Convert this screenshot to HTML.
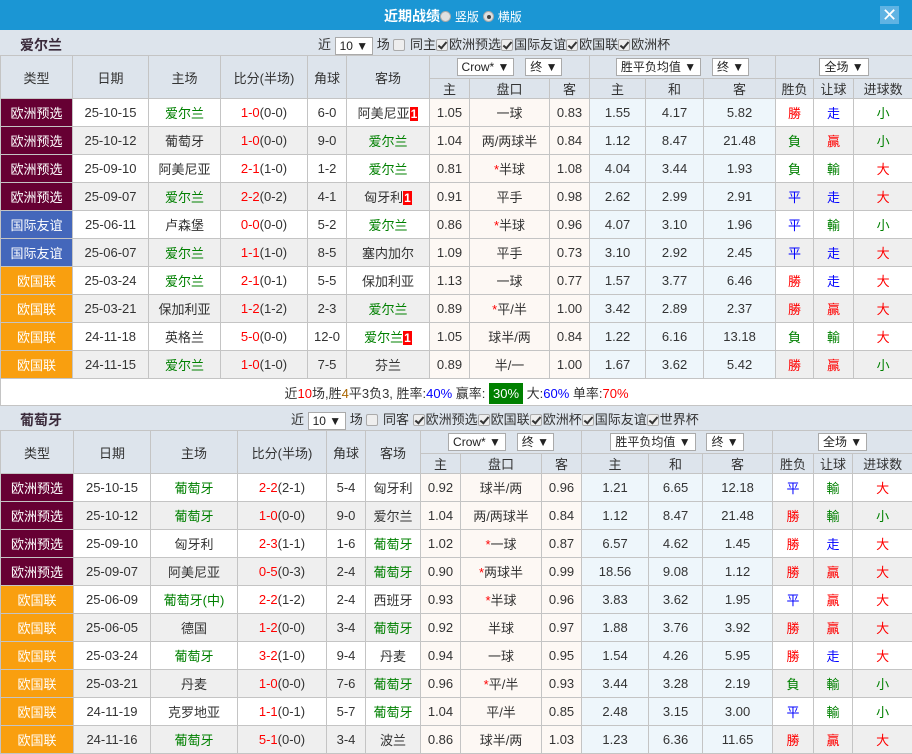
<!DOCTYPE html>
<html><head><meta charset="utf-8">
<style>
*{margin:0;padding:0;box-sizing:border-box}
body{width:912px;height:751px;overflow:hidden;background:#dde4ec;font-family:"Liberation Sans","Noto Sans CJK SC",sans-serif;font-size:13px;color:#333;position:relative}
.top{height:30px;background:#1b96d4;color:#fff;position:relative}
.top .tt{position:absolute;left:384px;top:6px;font-size:14px;font-weight:bold}
.top .rb{display:inline-block;width:11px;height:11px;border-radius:50%;background:#e0e0e0;border:1px solid #aaa;vertical-align:-1px;position:relative}
.top .rb.on:after{content:"";position:absolute;left:3px;top:3px;width:4px;height:4px;border-radius:50%;background:#444}
.top .sm{font-size:12px;font-weight:normal}
.x{position:absolute;left:880px;top:6px;width:19px;height:18px;background:#5fb3e3;color:#fff;font-size:18px;line-height:18px;text-align:center}
.sec{position:absolute;left:0;width:912px;height:25px}
.sec .nm{position:absolute;left:20px;top:5px;font-weight:bold;font-size:14px;color:#3a2a3a}
.fl{position:absolute;top:4px;white-space:nowrap;font-size:13px}
.sel{display:inline-block;background:#fff;border:1px solid #aaa;height:18px;line-height:16px;padding:0 4px;font-size:12px;vertical-align:middle;color:#222}
.cb{display:inline-block;width:12px;height:12px;border:1px solid #aaa;border-radius:2px;background:#eee;vertical-align:-2px;position:relative;margin-right:1px}
.cb.c:after{content:"";position:absolute;left:3px;top:0px;width:3px;height:7px;border:solid #333;border-width:0 2px 2px 0;transform:rotate(40deg)}
table{position:absolute;left:0;border-collapse:collapse;table-layout:fixed;width:912px}
td{border:1px solid #c4c4c4;text-align:center;height:28px;padding:0;white-space:nowrap;overflow:hidden;background:#fff}
tr.h td{background:#dde4ec;color:#333}
tr.h1 td{height:23px}
tr.h2 td{height:19px}
tr.a td{background:#efefef}
td.o{background:#fdf8f4!important}
td.e{background:#eef6fb!important}
td.t1{background:#660033!important;color:#fff}
td.t2{background:#4467bb!important;color:#fff}
td.t3{background:#f99f0f!important;color:#fff}
.g{color:#008000}.r{color:#f00}.b{color:#00f}.rs{color:#f00}
.n1{background:#f00;color:#fff;font-weight:bold;padding:0 1px;font-size:12px}
.sum td{height:27px;background:#fff}
</style></head><body>
<div class="top"><span class="tt">近期战绩<span class="rb"></span> <span class="sm">竖版</span> <span class="rb on"></span> <span class="sm">横版</span></span><div class="x">✕</div></div>

<div class="sec" style="top:30px"><span class="nm">爱尔兰</span>
<span class="fl" style="left:318px">近 <span class="sel">10 ▼</span> 场 <span class="cb"></span> 同主<span class="cb c"></span>欧洲预选<span class="cb c"></span>国际友谊<span class="cb c"></span>欧国联<span class="cb c"></span>欧洲杯</span></div>

<table style="top:55px">
<colgroup><col style="width:72px"><col style="width:76px"><col style="width:72px"><col style="width:87px"><col style="width:39px"><col style="width:83px"><col style="width:40px"><col style="width:80px"><col style="width:40px"><col style="width:56px"><col style="width:58px"><col style="width:72px"><col style="width:38px"><col style="width:40px"><col style="width:59px"></colgroup>
<tr class="h h1"><td rowspan="2">类型</td><td rowspan="2">日期</td><td rowspan="2">主场</td><td rowspan="2">比分(半场)</td><td rowspan="2">角球</td><td rowspan="2">客场</td><td colspan="3"><span class="sel">Crow* ▼</span> &nbsp; <span class="sel">终 ▼</span></td><td colspan="3"><span class="sel">胜平负均值 ▼</span> &nbsp; <span class="sel">终 ▼</span></td><td colspan="3"><span class="sel">全场 ▼</span></td></tr>
<tr class="h h2"><td>主</td><td>盘口</td><td>客</td><td>主</td><td>和</td><td>客</td><td>胜负</td><td>让球</td><td>进球数</td></tr>
<tr><td class="t1">欧洲预选</td><td>25-10-15</td><td class="g">爱尔兰</td><td><span class="rs">1-0</span>(0-0)</td><td>6-0</td><td>阿美尼亚<span class="n1">1</span></td><td class="o">1.05</td><td class="o">一球</td><td class="o">0.83</td><td class="e">1.55</td><td class="e">4.17</td><td class="e">5.82</td><td class="r">勝</td><td class="b">走</td><td class="g">小</td></tr>
<tr class="a"><td class="t1">欧洲预选</td><td>25-10-12</td><td>葡萄牙</td><td><span class="rs">1-0</span>(0-0)</td><td>9-0</td><td class="g">爱尔兰</td><td class="o">1.04</td><td class="o">两/两球半</td><td class="o">0.84</td><td class="e">1.12</td><td class="e">8.47</td><td class="e">21.48</td><td class="g">負</td><td class="r">贏</td><td class="g">小</td></tr>
<tr><td class="t1">欧洲预选</td><td>25-09-10</td><td>阿美尼亚</td><td><span class="rs">2-1</span>(1-0)</td><td>1-2</td><td class="g">爱尔兰</td><td class="o">0.81</td><td class="o"><span class="r">*</span>半球</td><td class="o">1.08</td><td class="e">4.04</td><td class="e">3.44</td><td class="e">1.93</td><td class="g">負</td><td class="g">輸</td><td class="r">大</td></tr>
<tr class="a"><td class="t1">欧洲预选</td><td>25-09-07</td><td class="g">爱尔兰</td><td><span class="rs">2-2</span>(0-2)</td><td>4-1</td><td>匈牙利<span class="n1">1</span></td><td class="o">0.91</td><td class="o">平手</td><td class="o">0.98</td><td class="e">2.62</td><td class="e">2.99</td><td class="e">2.91</td><td class="b">平</td><td class="b">走</td><td class="r">大</td></tr>
<tr><td class="t2">国际友谊</td><td>25-06-11</td><td>卢森堡</td><td><span class="rs">0-0</span>(0-0)</td><td>5-2</td><td class="g">爱尔兰</td><td class="o">0.86</td><td class="o"><span class="r">*</span>半球</td><td class="o">0.96</td><td class="e">4.07</td><td class="e">3.10</td><td class="e">1.96</td><td class="b">平</td><td class="g">輸</td><td class="g">小</td></tr>
<tr class="a"><td class="t2">国际友谊</td><td>25-06-07</td><td class="g">爱尔兰</td><td><span class="rs">1-1</span>(1-0)</td><td>8-5</td><td>塞内加尔</td><td class="o">1.09</td><td class="o">平手</td><td class="o">0.73</td><td class="e">3.10</td><td class="e">2.92</td><td class="e">2.45</td><td class="b">平</td><td class="b">走</td><td class="r">大</td></tr>
<tr><td class="t3">欧国联</td><td>25-03-24</td><td class="g">爱尔兰</td><td><span class="rs">2-1</span>(0-1)</td><td>5-5</td><td>保加利亚</td><td class="o">1.13</td><td class="o">一球</td><td class="o">0.77</td><td class="e">1.57</td><td class="e">3.77</td><td class="e">6.46</td><td class="r">勝</td><td class="b">走</td><td class="r">大</td></tr>
<tr class="a"><td class="t3">欧国联</td><td>25-03-21</td><td>保加利亚</td><td><span class="rs">1-2</span>(1-2)</td><td>2-3</td><td class="g">爱尔兰</td><td class="o">0.89</td><td class="o"><span class="r">*</span>平/半</td><td class="o">1.00</td><td class="e">3.42</td><td class="e">2.89</td><td class="e">2.37</td><td class="r">勝</td><td class="r">贏</td><td class="r">大</td></tr>
<tr><td class="t3">欧国联</td><td>24-11-18</td><td>英格兰</td><td><span class="rs">5-0</span>(0-0)</td><td>12-0</td><td class="g">爱尔兰<span class="n1">1</span></td><td class="o">1.05</td><td class="o">球半/两</td><td class="o">0.84</td><td class="e">1.22</td><td class="e">6.16</td><td class="e">13.18</td><td class="g">負</td><td class="g">輸</td><td class="r">大</td></tr>
<tr class="a"><td class="t3">欧国联</td><td>24-11-15</td><td class="g">爱尔兰</td><td><span class="rs">1-0</span>(1-0)</td><td>7-5</td><td>芬兰</td><td class="o">0.89</td><td class="o">半/一</td><td class="o">1.00</td><td class="e">1.67</td><td class="e">3.62</td><td class="e">5.42</td><td class="r">勝</td><td class="r">贏</td><td class="g">小</td></tr>
<tr class="sum"><td colspan="15">近<span class="r">10</span>场,胜<span style="color:#a60">4</span>平3负3, 胜率:<span class="b">40%</span> 赢率: <span style="background:#008000;color:#fff;padding:3px 4px">30%</span> 大:<span class="b">60%</span> 单率:<span class="r">70%</span></td></tr>
</table>

<div class="sec" style="top:405px"><span class="nm">葡萄牙</span>
<span class="fl" style="left:291px">近 <span class="sel">10 ▼</span> 场 <span class="cb"></span> 同客 <span class="cb c"></span>欧洲预选<span class="cb c"></span>欧国联<span class="cb c"></span>欧洲杯<span class="cb c"></span>国际友谊<span class="cb c"></span>世界杯</span></div>

<table style="top:430px">
<colgroup><col style="width:73px"><col style="width:77px"><col style="width:87px"><col style="width:89px"><col style="width:39px"><col style="width:55px"><col style="width:40px"><col style="width:81px"><col style="width:40px"><col style="width:67px"><col style="width:54px"><col style="width:70px"><col style="width:41px"><col style="width:39px"><col style="width:60px"></colgroup>
<tr class="h h1"><td rowspan="2">类型</td><td rowspan="2">日期</td><td rowspan="2">主场</td><td rowspan="2">比分(半场)</td><td rowspan="2">角球</td><td rowspan="2">客场</td><td colspan="3"><span class="sel">Crow* ▼</span> &nbsp; <span class="sel">终 ▼</span></td><td colspan="3"><span class="sel">胜平负均值 ▼</span> &nbsp; <span class="sel">终 ▼</span></td><td colspan="3"><span class="sel">全场 ▼</span></td></tr>
<tr class="h h2"><td>主</td><td>盘口</td><td>客</td><td>主</td><td>和</td><td>客</td><td>胜负</td><td>让球</td><td>进球数</td></tr>
<tr><td class="t1">欧洲预选</td><td>25-10-15</td><td class="g">葡萄牙</td><td><span class="rs">2-2</span>(2-1)</td><td>5-4</td><td>匈牙利</td><td class="o">0.92</td><td class="o">球半/两</td><td class="o">0.96</td><td class="e">1.21</td><td class="e">6.65</td><td class="e">12.18</td><td class="b">平</td><td class="g">輸</td><td class="r">大</td></tr>
<tr class="a"><td class="t1">欧洲预选</td><td>25-10-12</td><td class="g">葡萄牙</td><td><span class="rs">1-0</span>(0-0)</td><td>9-0</td><td>爱尔兰</td><td class="o">1.04</td><td class="o">两/两球半</td><td class="o">0.84</td><td class="e">1.12</td><td class="e">8.47</td><td class="e">21.48</td><td class="r">勝</td><td class="g">輸</td><td class="g">小</td></tr>
<tr><td class="t1">欧洲预选</td><td>25-09-10</td><td>匈牙利</td><td><span class="rs">2-3</span>(1-1)</td><td>1-6</td><td class="g">葡萄牙</td><td class="o">1.02</td><td class="o"><span class="r">*</span>一球</td><td class="o">0.87</td><td class="e">6.57</td><td class="e">4.62</td><td class="e">1.45</td><td class="r">勝</td><td class="b">走</td><td class="r">大</td></tr>
<tr class="a"><td class="t1">欧洲预选</td><td>25-09-07</td><td>阿美尼亚</td><td><span class="rs">0-5</span>(0-3)</td><td>2-4</td><td class="g">葡萄牙</td><td class="o">0.90</td><td class="o"><span class="r">*</span>两球半</td><td class="o">0.99</td><td class="e">18.56</td><td class="e">9.08</td><td class="e">1.12</td><td class="r">勝</td><td class="r">贏</td><td class="r">大</td></tr>
<tr><td class="t3">欧国联</td><td>25-06-09</td><td class="g">葡萄牙(中)</td><td><span class="rs">2-2</span>(1-2)</td><td>2-4</td><td>西班牙</td><td class="o">0.93</td><td class="o"><span class="r">*</span>半球</td><td class="o">0.96</td><td class="e">3.83</td><td class="e">3.62</td><td class="e">1.95</td><td class="b">平</td><td class="r">贏</td><td class="r">大</td></tr>
<tr class="a"><td class="t3">欧国联</td><td>25-06-05</td><td>德国</td><td><span class="rs">1-2</span>(0-0)</td><td>3-4</td><td class="g">葡萄牙</td><td class="o">0.92</td><td class="o">半球</td><td class="o">0.97</td><td class="e">1.88</td><td class="e">3.76</td><td class="e">3.92</td><td class="r">勝</td><td class="r">贏</td><td class="r">大</td></tr>
<tr><td class="t3">欧国联</td><td>25-03-24</td><td class="g">葡萄牙</td><td><span class="rs">3-2</span>(1-0)</td><td>9-4</td><td>丹麦</td><td class="o">0.94</td><td class="o">一球</td><td class="o">0.95</td><td class="e">1.54</td><td class="e">4.26</td><td class="e">5.95</td><td class="r">勝</td><td class="b">走</td><td class="r">大</td></tr>
<tr class="a"><td class="t3">欧国联</td><td>25-03-21</td><td>丹麦</td><td><span class="rs">1-0</span>(0-0)</td><td>7-6</td><td class="g">葡萄牙</td><td class="o">0.96</td><td class="o"><span class="r">*</span>平/半</td><td class="o">0.93</td><td class="e">3.44</td><td class="e">3.28</td><td class="e">2.19</td><td class="g">負</td><td class="g">輸</td><td class="g">小</td></tr>
<tr><td class="t3">欧国联</td><td>24-11-19</td><td>克罗地亚</td><td><span class="rs">1-1</span>(0-1)</td><td>5-7</td><td class="g">葡萄牙</td><td class="o">1.04</td><td class="o">平/半</td><td class="o">0.85</td><td class="e">2.48</td><td class="e">3.15</td><td class="e">3.00</td><td class="b">平</td><td class="g">輸</td><td class="g">小</td></tr>
<tr class="a"><td class="t3">欧国联</td><td>24-11-16</td><td class="g">葡萄牙</td><td><span class="rs">5-1</span>(0-0)</td><td>3-4</td><td>波兰</td><td class="o">0.86</td><td class="o">球半/两</td><td class="o">1.03</td><td class="e">1.23</td><td class="e">6.36</td><td class="e">11.65</td><td class="r">勝</td><td class="r">贏</td><td class="r">大</td></tr>
</table>
</body></html>
